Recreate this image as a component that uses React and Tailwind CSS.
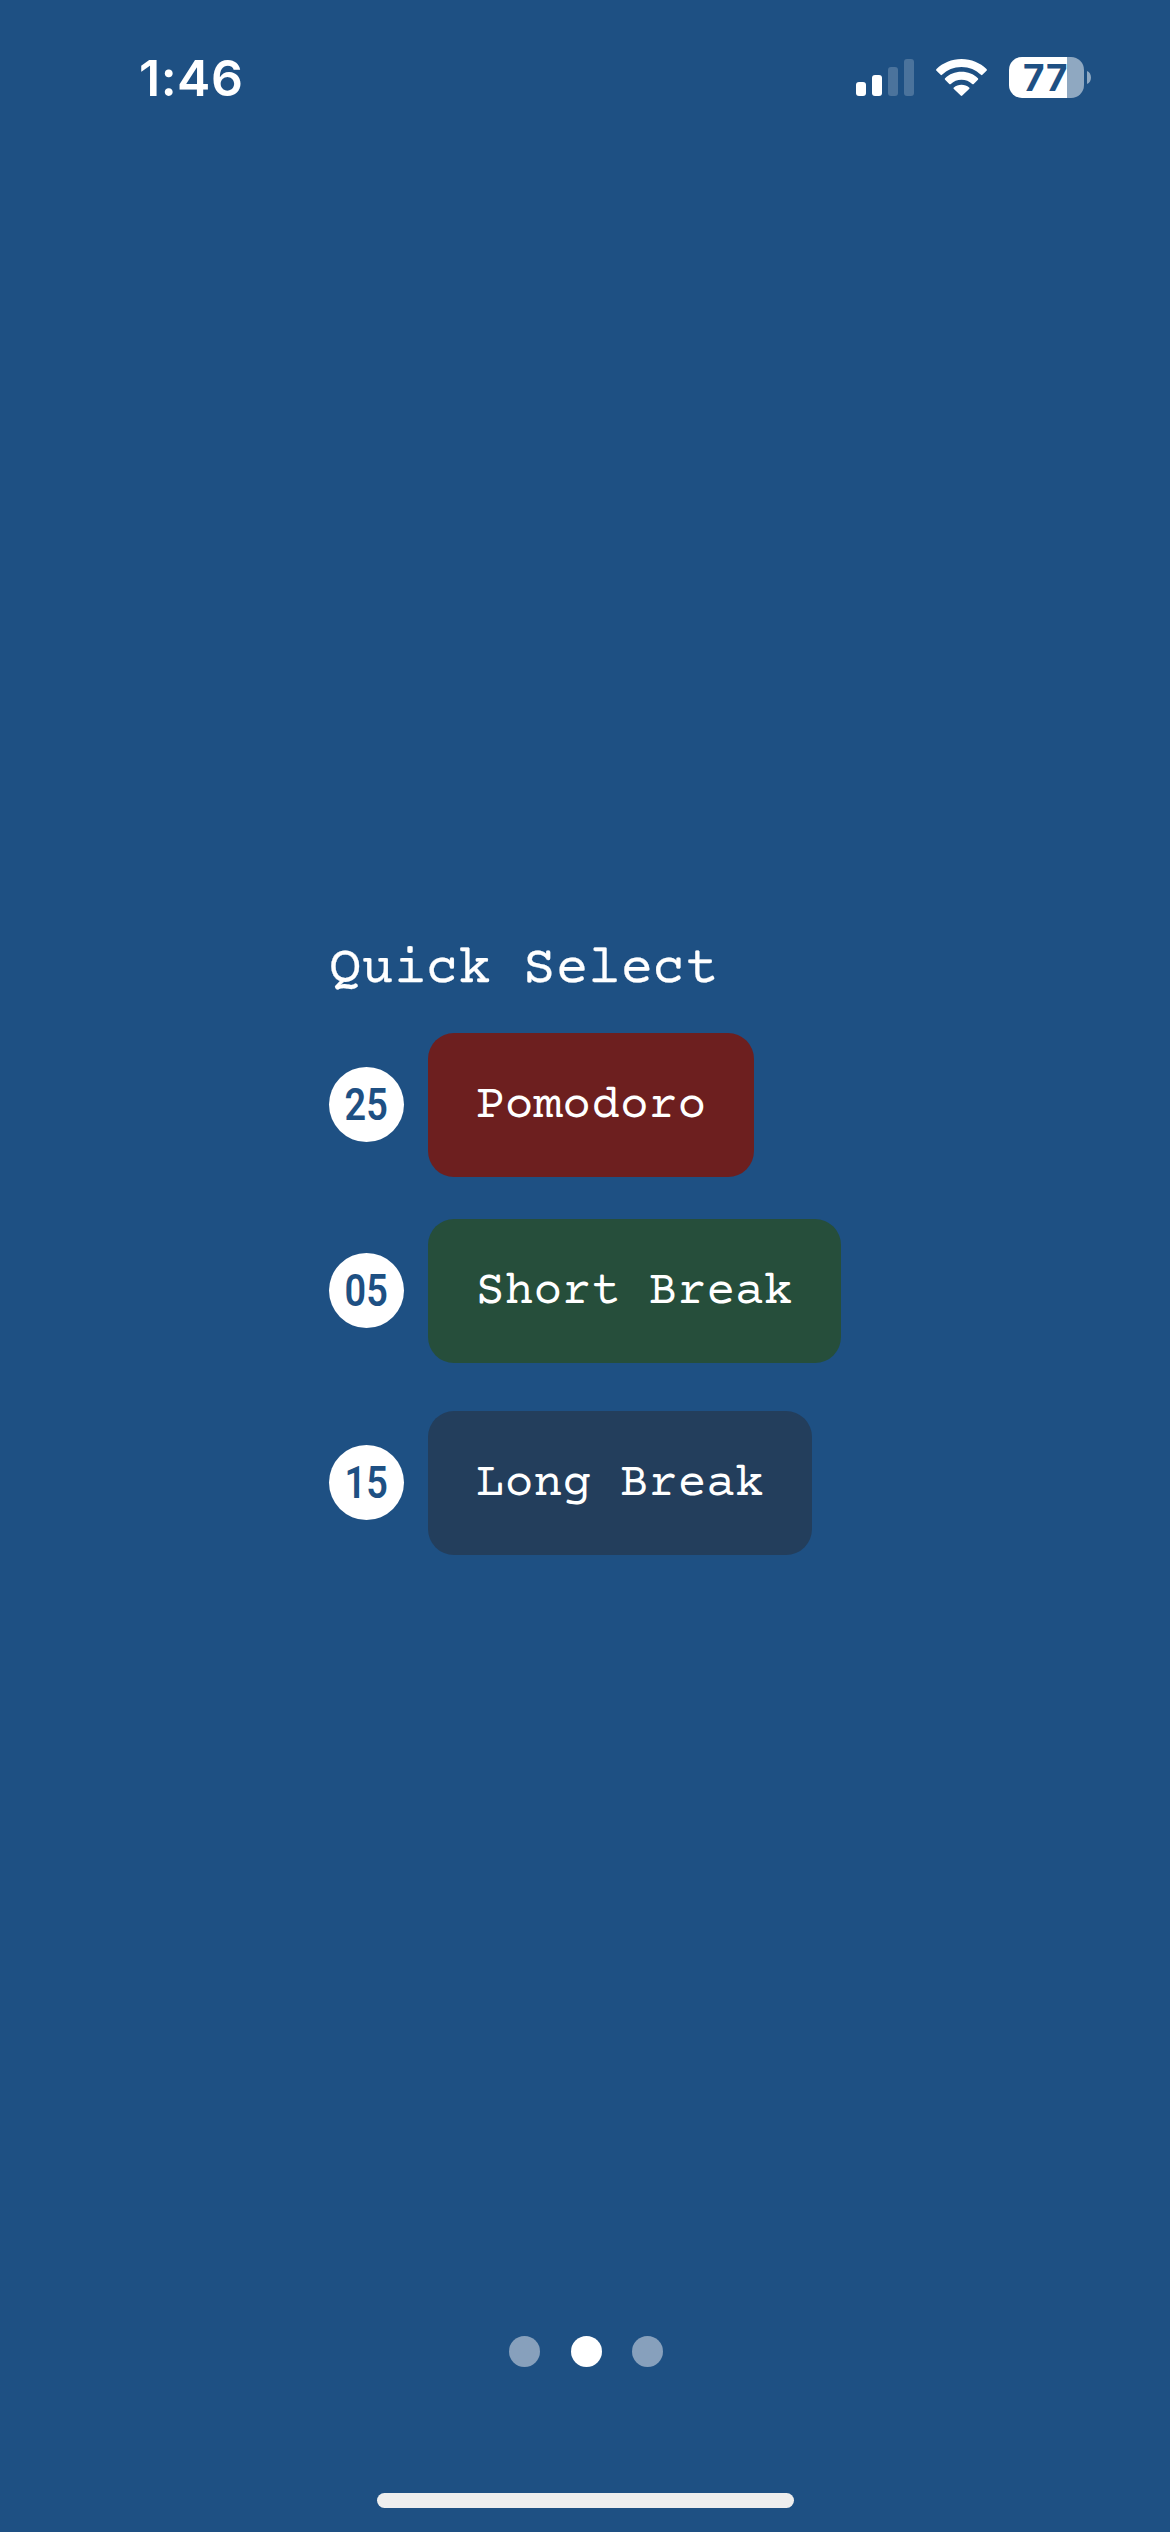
import React from "react";

const presets = [
  { minutes: "25", label: "Pomodoro", color: "bg-[#6d1f1f]", gap: "mt-0" },
  { minutes: "05", label: "Short Break", color: "bg-[#264e3b]", gap: "mt-[42px]" },
  { minutes: "15", label: "Long Break", color: "bg-[#233e5c]", gap: "mt-12" },
];

function Signal() {
  return (
    <div className="flex h-[37px] items-end gap-1.5">
      <span className="h-3.5 w-2.5 rounded-[3px] bg-white" />
      <span className="h-[21px] w-2.5 rounded-[3px] bg-white" />
      <span className="h-[29px] w-2.5 rounded-[3px] bg-[#4b739c]" />
      <span className="h-[37px] w-2.5 rounded-[3px] bg-[#4b739c]" />
    </div>
  );
}

function Wifi() {
  return (
    <svg className="ml-[22px] h-[37px] w-[51px]" viewBox="0 0 51 37" fill="#fff">
      <path d="M25.5 0C35.3 0 44.2 3.8 50.5 10.1Q51.3 10.9 50.5 11.7L46.4 15.8Q45.7 16.5 45 15.8C40 10.9 33.2 7.9 25.5 7.9S11 10.9 6 15.8Q5.3 16.5 4.6 15.8L.5 11.7Q-.3 10.9 .5 10.1C6.8 3.8 15.7 0 25.5 0Z" />
      <path d="M25.5 12.8C31.9 12.8 37.7 15.2 41.9 19.2Q42.7 20 41.9 20.8L37.7 24.9Q37 25.6 36.2 24.9C33.4 22.3 29.6 20.7 25.5 20.7S17.6 22.3 14.8 24.9Q14 25.6 13.3 24.9L9.1 20.8Q8.3 20 9.1 19.2C13.3 15.2 19.1 12.8 25.5 12.8Z" />
      <path d="M25.5 25.8C28.4 25.8 31.1 26.8 33.1 28.5Q33.9 29.2 33.1 30L26.3 36.6Q25.5 37.4 24.7 36.6L17.9 30Q17.1 29.2 17.9 28.5C19.9 26.8 22.6 25.8 25.5 25.8Z" />
    </svg>
  );
}

function Battery() {
  return (
    <div className="ml-[22px] flex items-center gap-[3px]">
      <div className="flex h-[41px] w-[75px] items-center rounded-[13px] bg-[linear-gradient(to_right,#fff_58px,#8fa8c1_58px)] pl-[14px] font-['Inter',sans-serif] text-[37px] leading-[41px] font-bold tracking-[0.8px] text-[#1e5083]">
        77
      </div>
      <svg className="h-[13px] w-1" viewBox="0 0 4 13" fill="#8fa8c1">
        <path d="M0 0C5.3 2 5.3 11 0 13Z" />
      </svg>
    </div>
  );
}

export default function App() {
  return (
    <main className="flex h-[2532px] w-[1170px] flex-col overflow-hidden bg-[#1e5083] text-white">
      <header className="flex h-[155px] items-center justify-between pr-[79px] pl-[139px]">
        <time className="font-['Inter',sans-serif] text-[50px] leading-none font-semibold tracking-[0.5px]">1:46</time>
        <div className="flex items-center">
          <Signal />
          <Wifi />
          <Battery />
        </div>
      </header>

      <section className="mt-[782px] flex flex-col items-start pl-[329px] font-['Courier_Prime','Courier_New','Liberation_Mono',monospace]">
        <h1 className="mb-[30px] h-[66px] text-[54px] leading-[66px] font-normal whitespace-pre [-webkit-text-stroke:0.25px_white]">
          Quick Select
        </h1>
        {presets.map((p) => (
          <div key={p.label} className={`flex items-center gap-6 ${p.gap}`}>
            <div className="mb-px flex size-[75px] items-center justify-center rounded-full bg-white">
              <span className="scale-x-[0.86] font-['Roboto',sans-serif] text-[44px] leading-none font-semibold text-[#1e5083]">
                {p.minutes}
              </span>
            </div>
            <button className={`h-36 rounded-[26px] px-12 pt-0.5 text-[48px] leading-none ${p.color}`}>{p.label}</button>
          </div>
        ))}
      </section>

      <nav className="mt-auto flex justify-center gap-[30.5px] pl-0.5">
        <span className="size-[31px] rounded-full bg-[#87a0bc]" />
        <span className="size-[31px] rounded-full bg-white" />
        <span className="size-[31px] rounded-full bg-[#87a0bc]" />
      </nav>
      <div className="mt-[126px] mb-6 ml-[377px] h-[15px] w-[417px] rounded-full bg-[#eee]" />
    </main>
  );
}
